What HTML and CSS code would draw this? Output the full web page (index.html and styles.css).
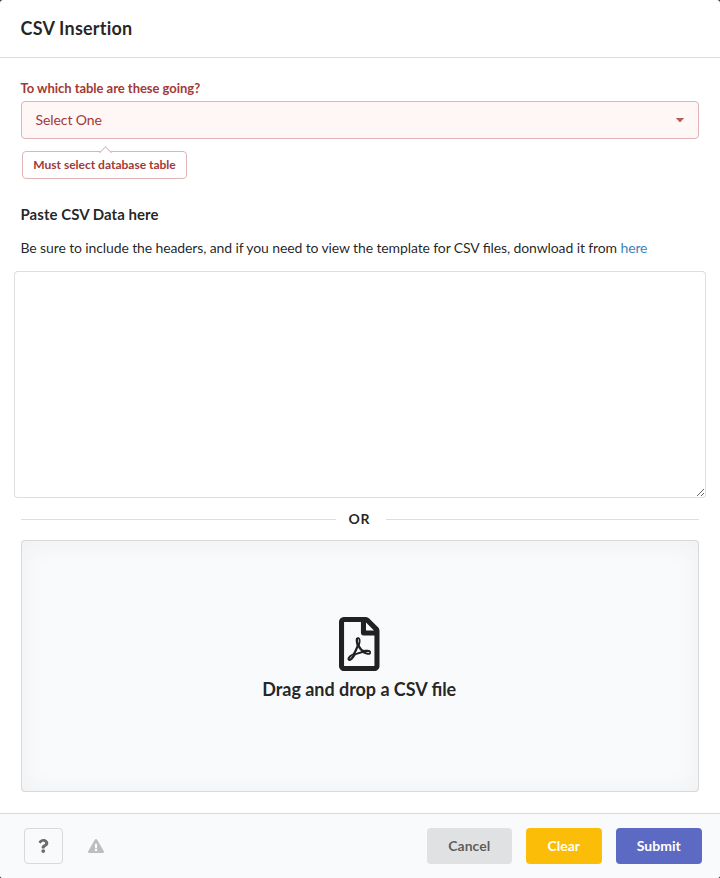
FILE: index.html
```
<!DOCTYPE html>
<html lang="en">
<head>
<meta charset="utf-8">
<title>CSV Insertion</title>
<link rel="stylesheet" href="styles.css">
</head>
<body>
<div class="modal">
  <header class="header"><h1>CSV Insertion</h1></header>
  <main class="content">
    <div class="field">
      <label class="label">To which table are these going?</label>
      <div class="dropdown">
        <span>Select One</span>
        <svg class="caret" viewBox="0 0 8 5"><path d="M0.5 0H7.5Q8.3 0 7.8 .6L4.4 4Q4 4.4 3.6 4L.2 .6Q-.3 0 .5 0Z"/></svg>
      </div>
      <div class="prompt">Must select database table</div>
    </div>
    <h2 class="title">Paste CSV Data here</h2>
    <p class="hint">Be sure to include the headers, and if you need to view the template for CSV files, donwload it from <a href="#">here</a></p>
    <textarea class="paste"></textarea>
    <div class="divider">OR</div>
    <div class="dropzone">
      <svg class="file" viewBox="0 0 384 512"><path d="M369.9 97.9L286 14C277 5 264.8-.1 252.1-.1H48C21.5 0 0 21.5 0 48v416c0 26.5 21.5 48 48 48h288c26.5 0 48-21.5 48-48V131.9c0-12.7-5.1-25-14.1-34zM332.1 128H256V51.9l76.1 76.1zM48 464V48h160v104c0 13.3 10.7 24 24 24h104v288H48zm250.2-143.7c-12.2-12-47-8.7-64.4-6.5-17.2-10.5-28.7-25-36.8-46.3 3.9-16.1 10.1-40.6 5.4-56-4.2-26.2-37.8-23.6-42.6-5.9-4.4 16.1-.4 38.5 7 67.1-10 23.9-24.9 56-35.4 74.4-20 10.3-47 26.2-51 46.2-3.3 15.8 26 55.2 76.1-31.2 22.4-7.4 46.8-16.5 68.4-20.1 18.9 10.2 41 17 55.8 17 25.5 0 28-28.2 17.5-38.7zm-198.1 77.8c5.1-13.7 24.5-29.5 30.4-35-19 30.3-30.4 35.7-30.4 35zm81.6-190.6c7.4 0 6.7 32.1 1.8 40.8-4.4-13.9-4.3-40.8-1.8-40.8zm-24.4 136.6c9.7-16.9 18-37 24.7-54.7 8.3 15.1 18.9 27.2 30.1 35.5-20.8 4.3-38.9 13.1-54.8 19.2zm131.6-5s-5 6-37.3-7.8c35.1-2.6 40.9 5.4 37.3 7.8z"/></svg>
      <div class="drop-text">Drag and drop a CSV file</div>
    </div>
  </main>
  <footer class="actions">
    <button class="help" aria-label="Help"><svg viewBox="0 0 384 512"><path d="M202.021 0C122.202 0 70.503 32.703 29.914 91.026c-7.363 10.58-5.093 25.086 5.178 32.874l43.138 32.709c10.373 7.865 25.132 6.026 33.253-4.148 25.049-31.381 43.63-49.449 82.757-49.449 30.764 0 68.816 19.799 68.816 49.631 0 22.552-18.617 34.134-48.993 51.164-35.423 19.86-82.299 44.576-82.299 106.405V320c0 13.255 10.745 24 24 24h72.471c13.255 0 24-10.745 24-24v-5.773c0-42.86 125.268-44.645 125.268-160.627C377.504 66.256 286.902 0 202.021 0zM192 373.459c-38.196 0-69.271 31.075-69.271 69.271 0 38.195 31.075 69.27 69.271 69.27s69.271-31.075 69.271-69.271-31.075-69.27-69.271-69.27z"/></svg></button>
    <svg class="warn" viewBox="0 0 576 512"><path d="M569.517 440.013C587.975 472.007 564.806 512 527.94 512H48.054c-36.937 0-59.999-40.055-41.577-71.987L246.423 23.985c18.467-32.009 64.72-31.951 83.154 0l239.94 416.028zM288 354c-25.405 0-46 20.595-46 46s20.595 46 46 46 46-20.595 46-46-20.595-46-46-46zm-43.673-165.346l7.418 136c.347 6.364 5.609 11.346 11.982 11.346h48.546c6.373 0 11.635-4.982 11.982-11.346l7.418-136c.375-6.874-5.098-12.654-11.982-12.654h-63.383c-6.884 0-12.356 5.78-11.981 12.654z"/></svg>
    <div class="buttons">
      <button class="btn cancel">Cancel</button>
      <button class="btn clear">Clear</button>
      <button class="btn submit">Submit</button>
    </div>
  </footer>
</div>
</body>
</html>
```
FILE: styles.css
```
* { box-sizing: border-box; }
body {
  margin: 0;
  background: #262626;
  font: 14px/20px Lato, sans-serif;
  color: rgba(0, 0, 0, .87);
}
h1, h2, p { margin: 0; }
.modal {
  display: flex;
  flex-direction: column;
  height: 878px;
  background: #fff;
  border-radius: 3px;
  overflow: hidden;
}
.header {
  height: 58px;
  padding: 16px 21px 0 20.5px;
  border-bottom: 1px solid rgba(34, 36, 38, .15);
}
.header h1 {
  font-size: 18px;
  line-height: 24px;
  font-weight: 700;
  letter-spacing: .22px;
}
.content { flex: 1; padding: 21px; }
.label {
  display: block;
  height: 22px;
  margin-left: -.5px;
  font-size: 13px;
  line-height: 19px;
  font-weight: 700;
  letter-spacing: -.03px;
  color: #9f3a38;
}
.dropdown {
  display: flex;
  align-items: center;
  justify-content: space-between;
  height: 38px;
  padding: 0 14px 0 13.5px;
  letter-spacing: -.08px;
  color: #9f3a38;
  background: #fff6f6;
  border: 1px solid #e0b4b4;
  border-radius: 4px;
}
.caret { width: 8px; height: 5px; fill: #b35f5d; }
.prompt {
  position: relative;
  width: 165px;
  height: 28px;
  margin: 12px 0 0 1px;
  font-size: 12px;
  line-height: 26px;
  font-weight: 700;
  text-align: center;
  color: #9f3a38;
  background: #fff;
  border: 1px solid #e0b4b4;
  border-radius: 4px;
}
.prompt::before {
  content: "";
  position: absolute;
  top: -4.5px;
  left: 50%;
  width: 8px;
  height: 8px;
  margin-left: -4px;
  background: #fff;
  border: solid #e0b4b4;
  border-width: 1px 0 0 1px;
  transform: rotate(45deg);
}
.title {
  margin: 25px 0 0 -.5px;
  font-size: 15px;
  line-height: 20px;
  font-weight: 700;
  letter-spacing: .04px;
}
.hint {
  margin: 14px 0 0 -.5px;
  white-space: nowrap;
  letter-spacing: -.116px;
  font-feature-settings: "liga" 1;
}
.hint a { color: #4183c4; text-decoration: none; }
.paste {
  display: block;
  width: 692px;
  height: 227px;
  margin: 13px -7px 0;
  background: #fff;
  border: 1px solid rgba(34, 36, 38, .15);
  border-radius: 4px;
  outline: 0;
}
.divider {
  display: flex;
  align-items: center;
  height: 20px;
  margin-top: 11px;
  font-weight: 700;
  letter-spacing: .7px;
}
.divider::before, .divider::after {
  content: "";
  height: 1px;
  flex: 1;
  background: rgba(34, 36, 38, .15);
}
.divider::before { flex: 0 0 315px; margin-right: 12.5px; }
.divider::after { margin-left: 15.5px; }
.dropzone {
  display: flex;
  flex-direction: column;
  align-items: center;
  height: 252px;
  margin-top: 11px;
  padding-top: 76px;
  background: #f9fafb;
  border: 1px solid rgba(34, 36, 38, .15);
  border-radius: 4px;
  box-shadow: inset 0 2px 25px rgba(34, 36, 38, .05);
}
.file { width: 40.5px; height: 54px; margin-right: 1px; }
.file path { fill: rgba(0, 0, 0, .87); }
.drop-text {
  margin: 6px 1.5px 0 0;
  font-size: 18px;
  line-height: 24px;
  font-weight: 700;
  letter-spacing: -.04px;
  font-feature-settings: "liga" 1;
}
.actions {
  display: flex;
  align-items: center;
  height: 65px;
  padding: 0 18px 0 24px;
  background: #f9fafb;
  border-top: 1px solid rgba(34, 36, 38, .15);
}
.help {
  display: flex;
  align-items: center;
  justify-content: center;
  width: 39px;
  height: 36px;
  padding: 0;
  background: transparent;
  border: 1px solid rgba(34, 36, 38, .15);
  border-radius: 4px;
}
.help svg { width: 10.5px; height: 14px; fill: #6b6b6c; }
.warn { width: 16px; height: 14px; margin-left: 25px; fill: #bcbdbd; }
.buttons { display: flex; gap: 14px; margin-left: auto; }
.btn {
  height: 36px;
  padding: 0 .5px 0 0;
  border: 0;
  border-radius: 4px;
  font: 700 14px/14px Lato, sans-serif;
  color: #fff;
}
.cancel { width: 85px; background: #e0e1e2; color: rgba(0, 0, 0, .6); }
.clear { width: 76px; background: #fbbd08; }
.submit { width: 86px; background: #5c6ac4; }
```
